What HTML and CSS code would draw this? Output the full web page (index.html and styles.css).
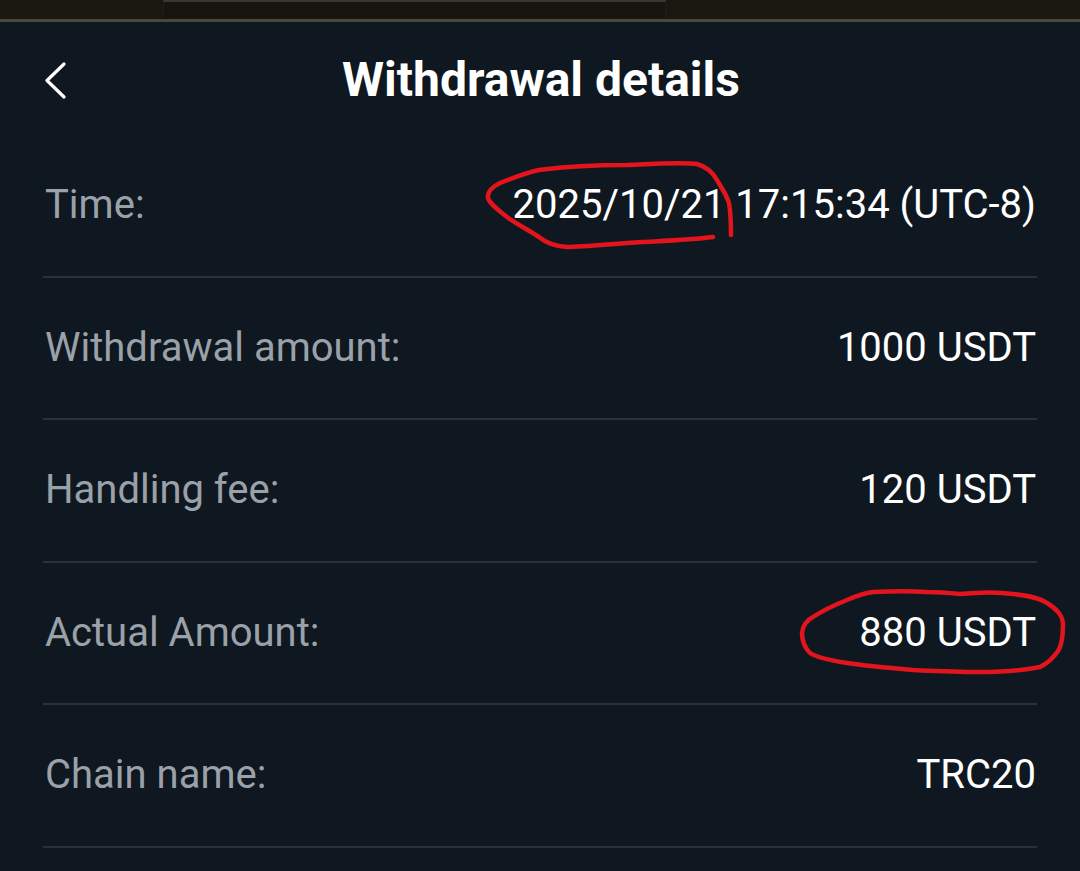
FILE: index.html
```html
<!DOCTYPE html>
<html lang="en">
<head>
<meta charset="utf-8">
<title>Withdrawal details</title>
<link rel="stylesheet" href="styles.css">
</head>
<body>
<div class="statusbar"><div class="statusbar-tab"></div></div>
<header class="topbar">
  <button class="back" aria-label="Back">
    <svg width="24" height="38" viewBox="0 0 24 38"><polyline points="20,2 3,18.5 20,35" fill="none" stroke="#ffffff" stroke-width="3.2" stroke-linecap="round" stroke-linejoin="round"/></svg>
  </button>
  <h1 class="title">Withdrawal details</h1>
  <span class="spacer"></span>
</header>
<main class="details">
  <div class="row"><span class="label">Time:</span><span class="value">2025/10/21 17:15:34 (UTC-8)</span></div>
  <div class="row"><span class="label">Withdrawal amount:</span><span class="value">1000 USDT</span></div>
  <div class="row"><span class="label">Handling fee:</span><span class="value">120 USDT</span></div>
  <div class="row"><span class="label">Actual Amount:</span><span class="value">880 USDT</span></div>
  <div class="row"><span class="label">Chain name:</span><span class="value">TRC20</span></div>
</main>
<svg class="marks" width="1080" height="871" viewBox="0 0 1080 871">
  <path d="M713 237 C690 240 660 241 642 242 C610 244 585 247 567 247 C552 246 545 242 539 237 C525 228 515 223 507 217 C498 210 490 204 488 198 C487 192 492 187 500 183 C515 177 525 173 539 170 C570 166 600 165 626 165 C650 164 680 162 697 164 C708 167 713 173 717 180 C723 190 727 196 729 203 C731 215 731 225 731 235" fill="none" stroke="#e3141b" stroke-width="4.5" stroke-linecap="round" stroke-linejoin="round"/>
  <path d="M960 594 C980 592 1000 592 1013 594 C1030 596 1040 598 1047 603 C1058 610 1063 616 1063 625 C1063 638 1062 645 1058 651 C1052 660 1046 664 1040 667 C1020 671 1000 672 980 672 C955 672 935 671 913 670 C890 668 867 666 847 663 C828 660 816 657 810 653 C804 647 802 640 802 633 C803 625 807 620 813 617 C825 609 837 604 847 600 C856 596 865 593 873 592 C895 591 912 591 927 592 C940 592 950 593 960 594" fill="none" stroke="#e3141b" stroke-width="4.5" stroke-linecap="round" stroke-linejoin="round"/>
</svg>
</body>
</html>
```
FILE: styles.css
```css
* { box-sizing: border-box; }
html, body { margin: 0; padding: 0; }
body {
  background: #0f1820;
  font-family: Roboto, "Liberation Sans", Arial, sans-serif;
  width: 1080px;
  height: 871px;
  overflow: hidden;
  position: relative;
}
.statusbar {
  height: 22px;
  background: #1a1711;
  border-bottom: 3px solid #4a4839;
  padding-left: 163px;
}
.statusbar-tab {
  width: 503px;
  height: 18px;
  border-top: 2px solid #3a382e;
  border-left: 1px solid #211e17;
  border-right: 1px solid #211e17;
  background: #17140f;
}
.topbar {
  height: 113px;
  display: grid;
  grid-template-columns: 1fr auto 1fr;
  align-items: center;
}
.back {
  justify-self: start;
  margin-left: 44px;
  margin-top: 4px;
  padding: 0;
  border: 0;
  background: transparent;
  display: flex;
  align-items: center;
}
.title {
  margin: 0;
  color: #ffffff;
  font-size: 48px;
  font-weight: 700;
  letter-spacing: 0;
  line-height: 1;
  padding-left: 2px;
  padding-top: 2px;
}
.details {
  padding: 0 43px;
}
.row {
  height: 142.5px;
  border-bottom: 2px solid #29313a;
  display: flex;
  align-items: center;
  justify-content: space-between;
  font-size: 40px;
  line-height: 1;
}
.label {
  color: #9aa1a9;
  padding-left: 2px;
}
.value {
  color: #ffffff;
  padding-right: 1px;
}
.marks {
  position: absolute;
  left: 0;
  top: 0;
  pointer-events: none;
}
```
